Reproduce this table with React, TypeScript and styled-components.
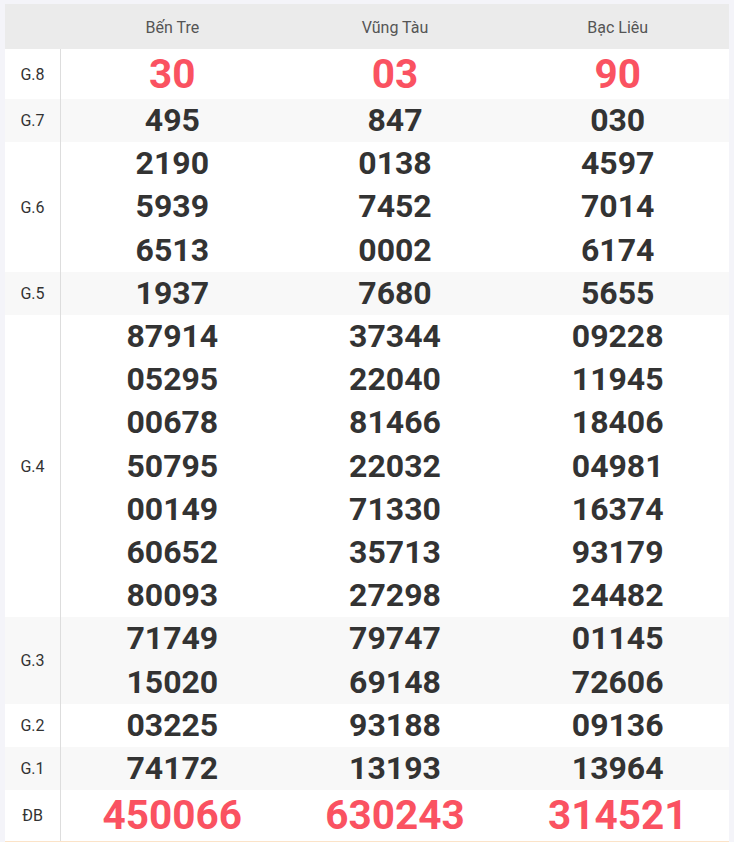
import React from 'react';
import styled, {createGlobalStyle} from 'styled-components';

const GlobalStyle = createGlobalStyle`
  html, body {
    margin: 0;
    padding: 0;
    background: #f4f4f9;
    font-family: Roboto, "Liberation Sans", Arial, sans-serif;
  }
`

const Page = styled.div`
  padding: 4px 5px 0;
`

const Table = styled.div`
  background: #fff;
  display: flex;
  flex-direction: column;
`

const Row = styled.div<{ $shaded?: boolean }>`
  display: grid;
  grid-template-columns: 56px repeat(3, 1fr);
  background: ${({$shaded}) => ($shaded ? '#f8f8f8' : '#fff')};
`

const HeaderRow = styled.div`
  display: grid;
  grid-template-columns: 56px repeat(3, 1fr);
  height: 45px;
  background: #ebebeb;
`

const HeaderCell = styled.div`
  display: flex;
  align-items: center;
  justify-content: center;
  padding-top: 1px;
  font-size: 16px;
  color: #555;
`

const Label = styled.div`
  display: flex;
  align-items: center;
  justify-content: center;
  border-right: 1px solid #ddd;
  font-size: 16px;
  color: #333;
`

const Cell = styled.div`
  display: flex;
  flex-direction: column;
  align-items: center;
`

const Num = styled.span<{ $big?: boolean; $tall?: number }>`
  font-weight: 700;
  font-size: ${({$big}) => ($big ? '40.5px' : '32px')};
  line-height: ${({$tall}) => ($tall ? `${$tall}px` : '43.2px')};
  color: ${({$big}) => ($big ? '#fa5261' : '#333')};
`

const Footer = styled.div`
  height: 2px;
  border-top: 1px solid #fbe3c8;
  background: #fff;
`

type Prize = {
    label: string;
    values: string[][];
    big?: boolean;
    tall?: number;
}

const provinces = ['Bến Tre', 'Vũng Tàu', 'Bạc Liêu'];

const prizes: Prize[] = [
    {label: 'G.8', big: true, tall: 50, values: [['30'], ['03'], ['90']]},
    {label: 'G.7', values: [['495'], ['847'], ['030']]},
    {label: 'G.6', values: [['2190', '5939', '6513'], ['0138', '7452', '0002'], ['4597', '7014', '6174']]},
    {label: 'G.5', values: [['1937'], ['7680'], ['5655']]},
    {
        label: 'G.4', values: [
            ['87914', '05295', '00678', '50795', '00149', '60652', '80093'],
            ['37344', '22040', '81466', '22032', '71330', '35713', '27298'],
            ['09228', '11945', '18406', '04981', '16374', '93179', '24482'],
        ]
    },
    {label: 'G.3', values: [['71749', '15020'], ['79747', '69148'], ['01145', '72606']]},
    {label: 'G.2', values: [['03225'], ['93188'], ['09136']]},
    {label: 'G.1', values: [['74172'], ['13193'], ['13964']]},
    {label: 'ĐB', big: true, tall: 51, values: [['450066'], ['630243'], ['314521']]},
];

const App = () => {
    return (
        <Page>
            <GlobalStyle/>
            <Table>
                <HeaderRow>
                    <div/>
                    {provinces.map(p => <HeaderCell key={p}>{p}</HeaderCell>)}
                </HeaderRow>
                {prizes.map((prize, i) => (
                    <Row key={prize.label} $shaded={i % 2 === 1}>
                        <Label>{prize.label}</Label>
                        {prize.values.map((col, j) => (
                            <Cell key={j}>
                                {col.map(n => <Num key={n} $big={prize.big} $tall={prize.tall}>{n}</Num>)}
                            </Cell>
                        ))}
                    </Row>
                ))}
            </Table>
            <Footer/>
        </Page>
    );
};

export default App;
